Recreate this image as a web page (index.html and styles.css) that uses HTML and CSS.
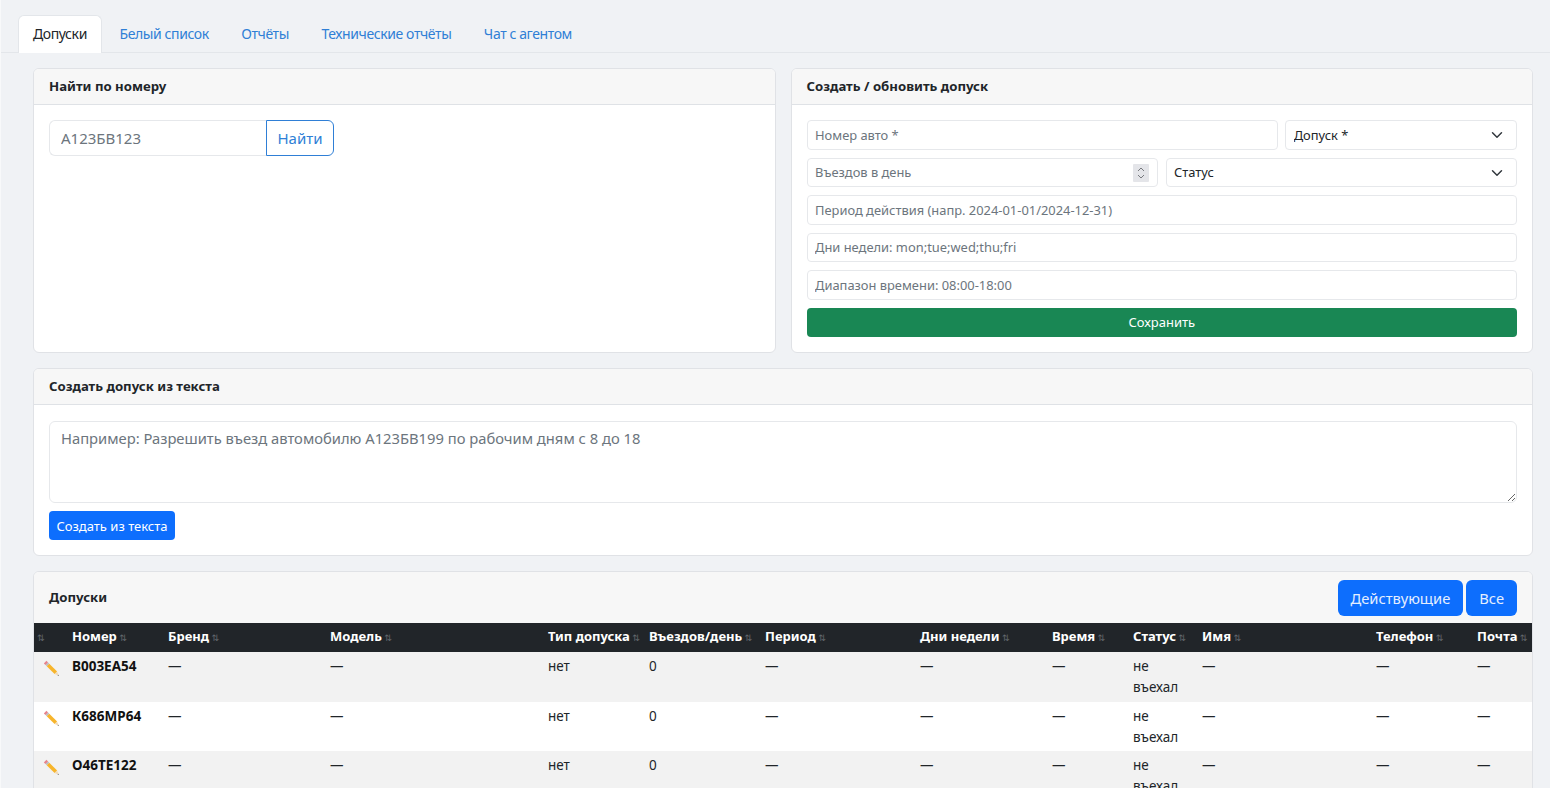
FILE: index.html
```html
<!DOCTYPE html>
<html lang="ru">
<head>
    <meta charset="UTF-8">
    <title>Допуски</title>
    <link rel="stylesheet" href="styles.css">
</head>
<body>
    <ul class="tabs">
        <li class="tab active">Допуски</li>
        <li class="tab">Белый список</li>
        <li class="tab">Отчёты</li>
        <li class="tab">Технические отчёты</li>
        <li class="tab">Чат с агентом</li>
    </ul>

    <main class="content">
        <div class="top-row">
            <section class="card">
                <div class="card-header">Найти по номеру</div>
                <div class="card-body">
                    <div class="search-group">
                        <input class="search-input" type="text" placeholder="А123БВ123">
                        <button class="btn-outline">Найти</button>
                    </div>
                </div>
            </section>

            <section class="card">
                <div class="card-header">Создать / обновить допуск</div>
                <div class="card-body form-grid">
                    <input class="field span-8" type="text" placeholder="Номер авто *">
                    <div class="select-box span-4">
                        <select class="field select"><option>Допуск *</option></select>
                        <svg class="chevron" viewBox="0 0 16 16"><path d="M2 5l6 6 6-6" fill="none" stroke="#343a40" stroke-width="2" stroke-linecap="round" stroke-linejoin="round"/></svg>
                    </div>
                    <div class="select-box span-6">
                        <input class="field number" type="number" placeholder="Въездов в день">
                        <svg class="spinner" viewBox="0 0 16 18"><rect width="16" height="18" rx="1" fill="#e4e5e9"/><path d="M5 7l3-3 3 3M5 11l3 3 3-3" fill="none" stroke="#77797e" stroke-width="1"/></svg>
                    </div>
                    <div class="select-box span-6">
                        <select class="field select"><option>Статус</option></select>
                        <svg class="chevron" viewBox="0 0 16 16"><path d="M2 5l6 6 6-6" fill="none" stroke="#343a40" stroke-width="2" stroke-linecap="round" stroke-linejoin="round"/></svg>
                    </div>
                    <input class="field span-12" type="text" placeholder="Период действия (напр. 2024-01-01/2024-12-31)">
                    <input class="field span-12" type="text" placeholder="Дни недели: mon;tue;wed;thu;fri">
                    <input class="field span-12" type="text" placeholder="Диапазон времени: 08:00-18:00">
                    <button class="btn-save span-12">Сохранить</button>
                </div>
            </section>
        </div>

        <section class="card">
            <div class="card-header">Создать допуск из текста</div>
            <div class="card-body">
                <textarea class="text-area" placeholder="Например: Разрешить въезд автомобилю А123БВ199 по рабочим дням с 8 до 18"></textarea>
                <button class="btn-small">Создать из текста</button>
            </div>
        </section>

        <section class="card">
            <div class="card-header list-header">
                <span>Допуски</span>
                <div class="filter-btns">
                    <button class="btn-primary">Действующие</button>
                    <button class="btn-primary">Все</button>
                </div>
            </div>
            <table class="passes">
                <colgroup>
                    <col class="c-edit"><col class="c-plate"><col class="c-brand"><col class="c-model"><col class="c-type">
                    <col class="c-per-day"><col class="c-period"><col class="c-days"><col class="c-time"><col class="c-status">
                    <col class="c-name"><col class="c-phone"><col class="c-mail">
                </colgroup>
                <thead>
                    <tr>
                        <th><span class="sort">⇅</span></th>
                        <th>Номер <span class="sort">⇅</span></th>
                        <th>Бренд <span class="sort">⇅</span></th>
                        <th>Модель <span class="sort">⇅</span></th>
                        <th>Тип допуска <span class="sort">⇅</span></th>
                        <th>Въездов/день <span class="sort">⇅</span></th>
                        <th>Период <span class="sort">⇅</span></th>
                        <th>Дни недели <span class="sort">⇅</span></th>
                        <th>Время <span class="sort">⇅</span></th>
                        <th>Статус <span class="sort">⇅</span></th>
                        <th>Имя <span class="sort">⇅</span></th>
                        <th>Телефон <span class="sort">⇅</span></th>
                        <th>Почта <span class="sort">⇅</span></th>
                    </tr>
                </thead>
                <tbody>
                    <tr>
                        <td><svg class="pencil" viewBox="0 0 16 16"><path d="M1.5 3.6L3.6 1.5 5 2.9 2.9 5z" fill="#e8848c"/><path d="M2.9 5L5 2.9l1 1L3.9 6z" fill="#b9bcc2"/><path d="M3.9 6L6 3.9l6.4 6.4-2.1 2.1z" fill="#f7b52c"/><path d="M10.3 12.4l2.1-2.1 1.1 3.2z" fill="#f3d9b1"/><path d="M12.7 13.3l.8-.3.3 1z" fill="#444"/></svg></td>
                        <td class="plate">В003ЕА54</td><td>—</td><td>—</td><td>нет</td><td>0</td><td>—</td><td>—</td><td>—</td><td>не въехал</td><td>—</td><td>—</td><td>—</td>
                    </tr>
                    <tr>
                        <td><svg class="pencil" viewBox="0 0 16 16"><path d="M1.5 3.6L3.6 1.5 5 2.9 2.9 5z" fill="#e8848c"/><path d="M2.9 5L5 2.9l1 1L3.9 6z" fill="#b9bcc2"/><path d="M3.9 6L6 3.9l6.4 6.4-2.1 2.1z" fill="#f7b52c"/><path d="M10.3 12.4l2.1-2.1 1.1 3.2z" fill="#f3d9b1"/><path d="M12.7 13.3l.8-.3.3 1z" fill="#444"/></svg></td>
                        <td class="plate">К686МР64</td><td>—</td><td>—</td><td>нет</td><td>0</td><td>—</td><td>—</td><td>—</td><td>не въехал</td><td>—</td><td>—</td><td>—</td>
                    </tr>
                    <tr>
                        <td><svg class="pencil" viewBox="0 0 16 16"><path d="M1.5 3.6L3.6 1.5 5 2.9 2.9 5z" fill="#e8848c"/><path d="M2.9 5L5 2.9l1 1L3.9 6z" fill="#b9bcc2"/><path d="M3.9 6L6 3.9l6.4 6.4-2.1 2.1z" fill="#f7b52c"/><path d="M10.3 12.4l2.1-2.1 1.1 3.2z" fill="#f3d9b1"/><path d="M12.7 13.3l.8-.3.3 1z" fill="#444"/></svg></td>
                        <td class="plate">О46ТЕ122</td><td>—</td><td>—</td><td>нет</td><td>0</td><td>—</td><td>—</td><td>—</td><td>не въехал</td><td>—</td><td>—</td><td>—</td>
                    </tr>
                </tbody>
            </table>
        </section>
    </main>
</body>
</html>
```

FILE: styles.css
```css
* {
    margin: 0;
    padding: 0;
    box-sizing: border-box;
}

html, body {
    height: 100%;
    overflow: hidden;
}

body {
    background: #f0f2f5;
    color: #212529;
    font-family: "Noto Sans", sans-serif;
    font-size: 14px;
    line-height: 21px;
    border-left: 1px solid #f8f9fa;
}

input, select, textarea, button {
    font-family: inherit;
}

/* tabs */
.tabs {
    display: flex;
    list-style: none;
    margin-top: 15px;
    padding-left: 17px;
    border-bottom: 1px solid #e3e6ea;
    height: 38px;
}

.tab {
    padding: 7px 14px 0;
    height: 37px;
    color: #2f7fd6;
    font-size: 14px;
    letter-spacing: -0.4px;
    border-radius: 6px 6px 0 0;
    border: 1px solid transparent;
    border-bottom: 0;
    margin-right: 2.5px;
}

.tab.active {
    background: #fff;
    color: #212529;
    border-color: #e3e6ea;
    height: 38px;
}

/* layout */
.content {
    padding: 15px 17px 0 32px;
    display: flex;
    flex-direction: column;
    gap: 15px;
}

.top-row {
    display: grid;
    grid-template-columns: 1fr 1fr;
    gap: 15px;
}

.card {
    background: #fff;
    border: 1px solid #e0e2e6;
    border-radius: 6px;
    overflow: hidden;
}

.card-header {
    background: #f7f7f7;
    border-bottom: 1px solid #dfe2e6;
    height: 36px;
    padding: 7px 15px;
    font-size: 13.2px;
    font-weight: 700;
}

.card-body {
    padding: 15px;
}

/* search */
.search-group {
    display: flex;
    width: 285px;
    height: 36px;
}

.search-input {
    flex: 1;
    min-width: 0;
    padding: 0 11px;
    font-size: 15px;
    border: 1px solid #e6e8eb;
    border-right: 0;
    border-radius: 6px 0 0 6px;
    outline: none;
}

.btn-outline {
    width: 68px;
    font-size: 15px;
    color: #2f7fd6;
    background: #fff;
    border: 1px solid #2f7fd6;
    border-radius: 0 6px 6px 0;
}

::placeholder {
    color: #6c757d;
    opacity: 1;
}

/* create form */
.form-grid {
    display: grid;
    grid-template-columns: repeat(12, 1fr);
    gap: 8px 7.5px;
}

.span-4 { grid-column: span 4; }
.span-6 { grid-column: span 6; }
.span-8 { grid-column: span 8; }
.span-12 { grid-column: span 12; }

.field {
    display: block;
    width: 100%;
    height: 29.5px;
    padding: 0 7.5px;
    font-size: 12.9px;
    color: #212529;
    background: #fff;
    border: 1px solid #e6e8eb;
    border-radius: 4px;
    outline: none;
}

.number::-webkit-inner-spin-button {
    display: none;
}

.select-box {
    position: relative;
}

.select {
    appearance: none;
}

.chevron {
    position: absolute;
    top: 9px;
    right: 14px;
    width: 12px;
    height: 12px;
}

.spinner {
    position: absolute;
    top: 6px;
    right: 9px;
    width: 16px;
    height: 18px;
}

.btn-save {
    height: 29.5px;
    color: #fff;
    background: #198754;
    border: 0;
    border-radius: 4px;
    font-size: 13px;
}

/* text form */
.text-area {
    display: block;
    width: 100%;
    height: 82px;
    padding: 6px 11px;
    font-size: 14.75px;
    line-height: 21px;
    border: 1px solid #e6e8eb;
    border-radius: 6px;
    outline: none;
    margin: 1px 0 8px;
}

.btn-small {
    display: block;
    width: 126px;
    height: 29px;
    color: #fff;
    background: #0d6efd;
    border: 0;
    border-radius: 4px;
    font-size: 13px;
}

/* list */
.list-header {
    display: flex;
    align-items: center;
    justify-content: space-between;
    height: 51px;
    padding: 0 15px;
    border-bottom: 0;
}

.filter-btns {
    display: flex;
    gap: 3px;
}

.btn-primary {
    height: 36px;
    padding: 0 13px;
    color: #e4eeff;
    background: #0d6efd;
    border: 0;
    border-radius: 6px;
    font-size: 14.7px;
}

.passes {
    width: 100%;
    table-layout: fixed;
    border-collapse: collapse;
    font-size: 13.5px;
}

.c-edit { width: 34px; }
.c-plate { width: 96px; }
.c-brand { width: 162px; }
.c-model { width: 218px; }
.c-type { width: 101px; }
.c-per-day { width: 116px; }
.c-period { width: 155px; }
.c-days { width: 132px; }
.c-time { width: 81px; }
.c-status { width: 69px; }
.c-name { width: 174px; }
.c-phone { width: 101px; }
.c-mail { width: 60px; }

.passes th {
    background: #212529;
    color: #fff;
    text-align: left;
    font-size: 13px;
    font-weight: 700;
    height: 29px;
    padding: 0 4px;
    white-space: nowrap;
}

.sort {
    font-family: "DejaVu Sans", sans-serif;
    font-size: 9px;
    font-weight: 400;
    color: #62676c;
    margin-left: -1px;
}

.passes td {
    height: 49.7px;
    padding: 3.85px 4px;
    vertical-align: top;
}

.passes tbody tr:nth-child(odd) td {
    background: #f2f2f2;
}

.plate {
    font-weight: 700;
    color: #111;
}

.pencil {
    display: block;
    width: 19.5px;
    height: 19.5px;
    margin: 3px 0 0 4px;
}
```
